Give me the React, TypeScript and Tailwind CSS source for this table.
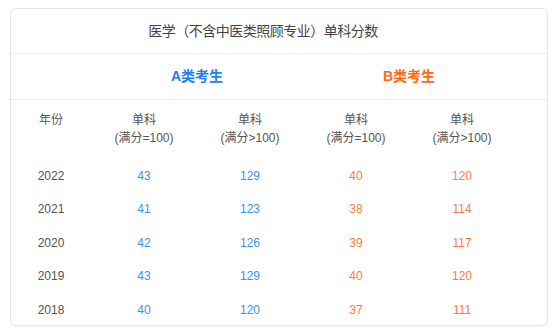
import React from 'react';

const rows = [
  { year: '2022', a1: 43, a2: 129, b1: 40, b2: 120 },
  { year: '2021', a1: 41, a2: 123, b1: 38, b2: 114 },
  { year: '2020', a1: 42, a2: 126, b1: 39, b2: 117 },
  { year: '2019', a1: 43, a2: 129, b1: 40, b2: 120 },
  { year: '2018', a1: 40, a2: 120, b1: 37, b2: 111 },
];

const cols = 'grid grid-cols-[80px_106px_106px_106px_106px]';

export default function App() {
  return (
    <div
      className="min-h-screen bg-white pt-2 pl-[10px]"
      style={{ fontFamily: '"Liberation Sans", "Noto Sans CJK SC", sans-serif' }}
    >
      <div className="w-[538px] h-[318px] rounded-md border border-[#e6e6e6] bg-white shadow-[0_1px_2px_rgba(0,0,0,0.04)] overflow-hidden">
        {/* Title */}
        <div className="h-[45px] flex items-center border-b border-[#ebebeb]">
          <div className="w-[504px] text-center text-[14px] tracking-[-0.5px] text-[#444]">
            医学（不含中医类照顾专业）单科分数
          </div>
        </div>

        {/* Group header */}
        <div className="h-[46px] border-b border-[#ebebeb]">
          <div className={`${cols} h-full items-center text-[14px] font-bold`}>
            <div />
            <div className="col-span-2 text-center text-[#1a7ef5]">A类考生</div>
            <div className="col-span-2 text-center text-[#ff6a0f]">B类考生</div>
          </div>
        </div>

        {/* Column header */}
        <div className={`${cols} pt-[11px] pb-[12px] text-[12px] leading-[18px] text-[#555] text-center`}>
          <div>年份</div>
          {['=', '>', '=', '>'].map((op, i) => (
            <div key={i}>
              <div>单科</div>
              <div>(满分{op}100)</div>
            </div>
          ))}
        </div>

        {/* Data */}
        {rows.map((r) => (
          <div key={r.year} className={`${cols} h-[33.5px] items-center text-[12px] text-center`}>
            <div className="text-[#555]">{r.year}</div>
            <div className="text-[#3b8ff6]">{r.a1}</div>
            <div className="text-[#3b8ff6]">{r.a2}</div>
            <div className="text-[#ff7a3a]">{r.b1}</div>
            <div className="text-[#ff7a3a]">{r.b2}</div>
          </div>
        ))}
      </div>
    </div>
  );
}
